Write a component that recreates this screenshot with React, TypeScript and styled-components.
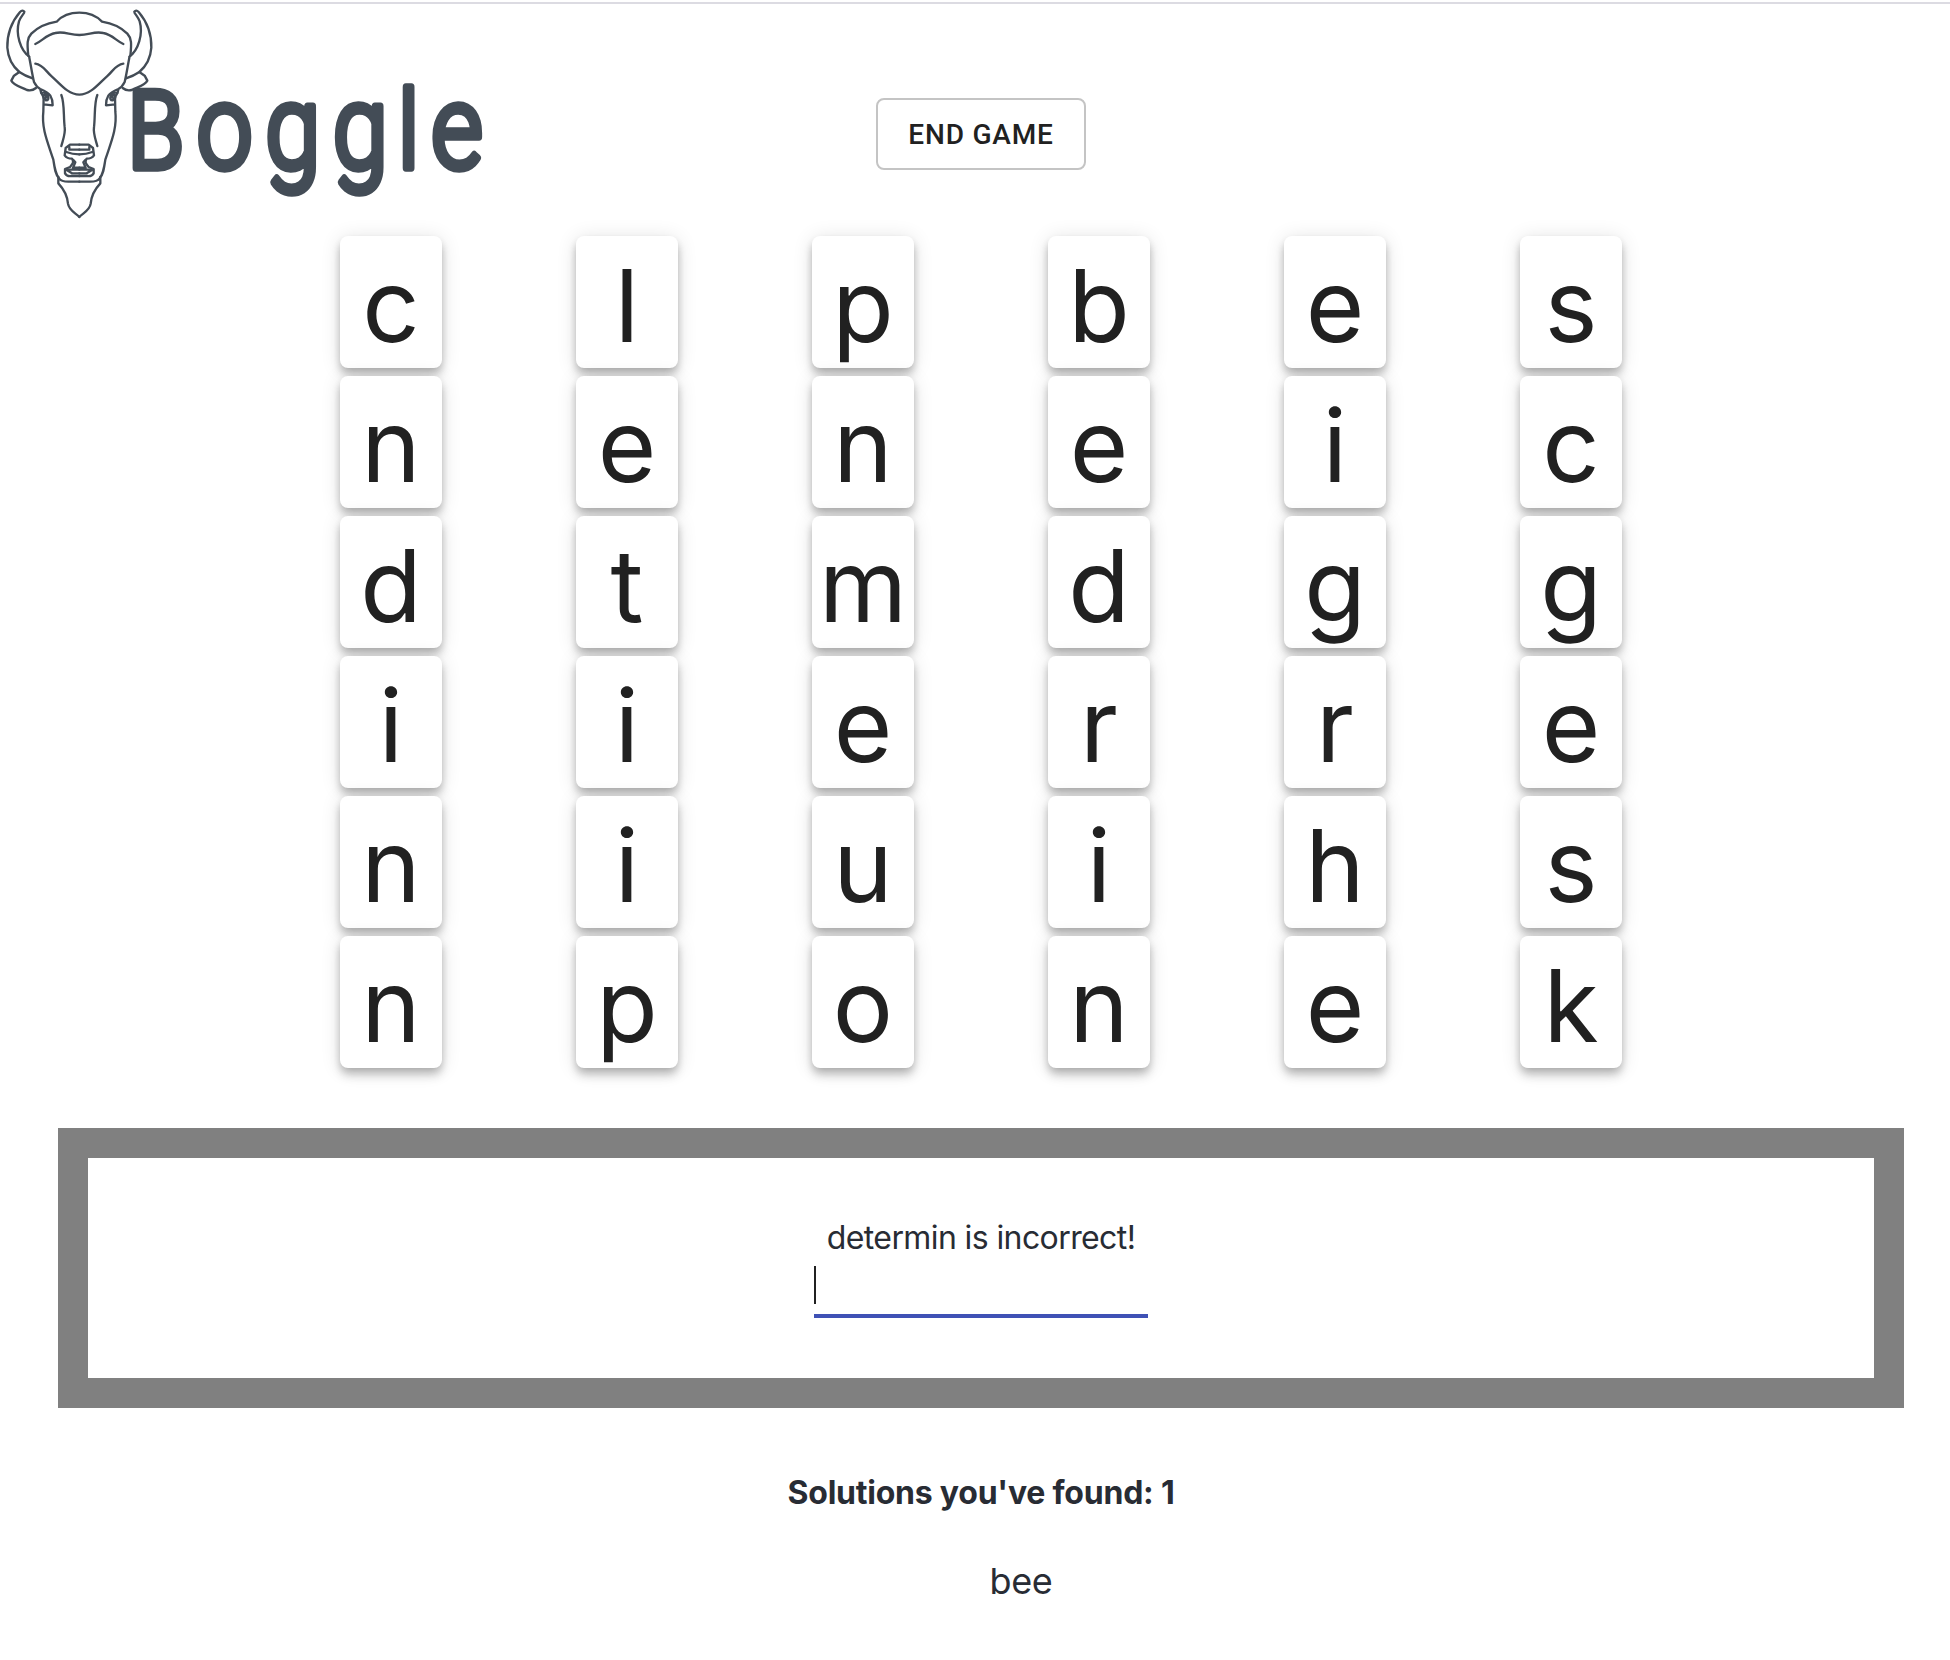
import React from 'react';
import styled, { createGlobalStyle } from 'styled-components';

const GlobalStyle = createGlobalStyle`
  *, *::before, *::after { box-sizing: border-box; }
  html, body { margin: 0; padding: 0; background: #fff; overflow: hidden; }
`;

const Page = styled.div`
  display: flex;
  flex-direction: column;
  align-items: center;
  width: 1962px;
  height: 1660px;
  padding-top: 2px;
  color: #282c34;
  font-family: Inter, 'Liberation Sans', sans-serif;
`;

const Header = styled.header`
  display: grid;
  grid-template-columns: 1fr auto 1fr;
  width: 100%;
  height: 234px;
  border-top: 2px solid #dcdbe2;
`;

const Logo = styled.svg`
  display: block;
  width: 500px;
  height: 226px;
`;

const EndButton = styled.button`
  width: 210px;
  height: 72px;
  margin-top: 94px;
  padding: 0;
  border: 2px solid #c4c4c4;
  border-radius: 8px;
  background: transparent;
  color: #212121;
  font: 500 28px/49px Roboto, sans-serif;
  letter-spacing: 0.8px;
`;

const Board = styled.main`
  display: grid;
  grid-template-columns: repeat(6, 102px);
  column-gap: 134px;
  row-gap: 8px;
`;

const Tile = styled.div`
  display: flex;
  justify-content: center;
  height: 132px;
  padding-top: 10px;
  border-radius: 8px;
  background: #fff;
  color: #212121;
  font-size: 100.5px;
  line-height: 120px;
  box-shadow: 0 4px 8px -2px rgba(0, 0, 0, 0.2), 0 8px 10px 0 rgba(0, 0, 0, 0.14),
    0 2px 20px 0 rgba(0, 0, 0, 0.12);
`;

const GuessPanel = styled.section`
  display: flex;
  flex-direction: column;
  align-items: center;
  width: 1846px;
  height: 280px;
  margin-top: 60px;
  padding-top: 58px;
  border: 30px solid #808080;
`;

const Message = styled.div`
  height: 44px;
  font-size: 32px;
  line-height: 44px;
  letter-spacing: -0.6px;
  white-space: nowrap;
`;

const GuessField = styled.div`
  display: flex;
  align-items: flex-start;
  width: 334px;
  height: 58px;
  padding-top: 6px;
  border-bottom: 4px solid #3f51b5;
`;

const Caret = styled.span`
  width: 2px;
  height: 38px;
  background: #212121;
`;

const Found = styled.h2`
  margin: 63px 0 0;
  font-size: 32px;
  font-weight: 700;
  line-height: 44px;
  letter-spacing: -0.23px;
  white-space: nowrap;
`;

const WordList = styled.ul`
  margin: 44px 0 0;
  padding: 0 0 0 80px;
  list-style: none;
  font-size: 36px;
  line-height: 44px;
  letter-spacing: -0.4px;
`;

const rows = ['clpbes', 'neneic', 'dtmdgg', 'iierre', 'niuihs', 'nponek'];

function BoggleLogo() {
  return (
    <Logo viewBox="0 4 500 226" role="img" aria-label="Boggle">
      <g transform="scale(.33333)" fill="none" stroke="#434c56" strokeWidth="7" strokeLinecap="round" strokeLinejoin="round">
        <path d="M85 168 C81 130 81 115 94 101 C112 83 138 70 170 65 C189 44 212 38 238 38 C264 38 287 45 306 65 C338 70 364 83 382 101 C395 115 395 130 391 168" />
        <path d="M106 132 C126 124 139 104 166 99 C192 93 207 104 238 105 C269 104 284 93 310 99 C337 104 350 124 370 132" />
        <path d="M106 191 C130 194 138 215 155 229 C179 250 204 284 238 284 C272 284 297 250 321 229 C338 215 346 194 370 191" />
        <g id="bison-half">
          <path d="M88 173 C93 198 96 221 102 246 C107 256 113 263 121 267 C128 270 145 278 151 287 Q158 298 158 316 L131 313 M121 269 C122 280 127 285 131 291 L130 335 C124 386 144 429 160 479 C164 506 166 522 177 535 Q184 545 205 545 L238 545" />
          <path d="M88 170 C61 151 46 102 57 64 C64 47 73 41 73 35 Q68 28 60 36 C36 64 21 95 22 143 C24 172 38 199 58 216 C71 225 85 231 98 235" />
          <path d="M58 216 L42 227 L34 242 C43 259 64 260 81 270 Q96 274 108 264" />
          <path d="M124 279 Q137 275 144 287 Q148 301 138 301 L130 293 M132 285 Q140 285 138 293" />
          <path d="M184 285 C194 310 190 348 194 381 C197 401 189 419 184 438" />
          <path d="M175 531 V550 C192 568 202 588 204 611 C207 632 227 639 238 651" />
          <path d="M238 434 H210 L197 444 L194 466 Q201 476 216 476 C223 487 218 492 210 501 L195 507 L195 520 Q201 530 214 528 H238" />
          <path d="M208 441 V449 H238 M199 456 Q217 463 238 463 M200 510 L216 520 H238 M205 509 H238 M220 480 L226 487 L219 503 H238" />
        </g>
        <use href="#bison-half" transform="translate(476 0) scale(-1 1)" />
      </g>
      <text
        transform="scale(.85 1)"
        fill="#434c56"
        stroke="#434c56"
        strokeWidth="7.5"
        strokeLinejoin="round"
        fontFamily="Roboto, sans-serif"
        fontWeight="300"
        fontSize="117"
        y="168.5"
      >
        <tspan x="150" fontSize="108">B</tspan>
        <tspan x="231.5">o</tspan>
        <tspan x="312">g</tspan>
        <tspan x="391.5">g</tspan>
        <tspan x="468.5" fontSize="108">l</tspan>
        <tspan x="507.5">e</tspan>
      </text>
    </Logo>
  );
}

export default function App() {
  return (
    <>
      <GlobalStyle />
      <Page>
        <Header>
          <BoggleLogo />
          <EndButton type="button">END GAME</EndButton>
        </Header>
        <Board>
          {rows.flatMap((row, r) => [...row].map((letter, c) => <Tile key={`${r}-${c}`}>{letter}</Tile>))}
        </Board>
        <GuessPanel>
          <Message>determin is incorrect!</Message>
          <GuessField>
            <Caret />
          </GuessField>
        </GuessPanel>
        <Found>Solutions you've found: 1</Found>
        <WordList>
          <li>bee</li>
        </WordList>
      </Page>
    </>
  );
}
